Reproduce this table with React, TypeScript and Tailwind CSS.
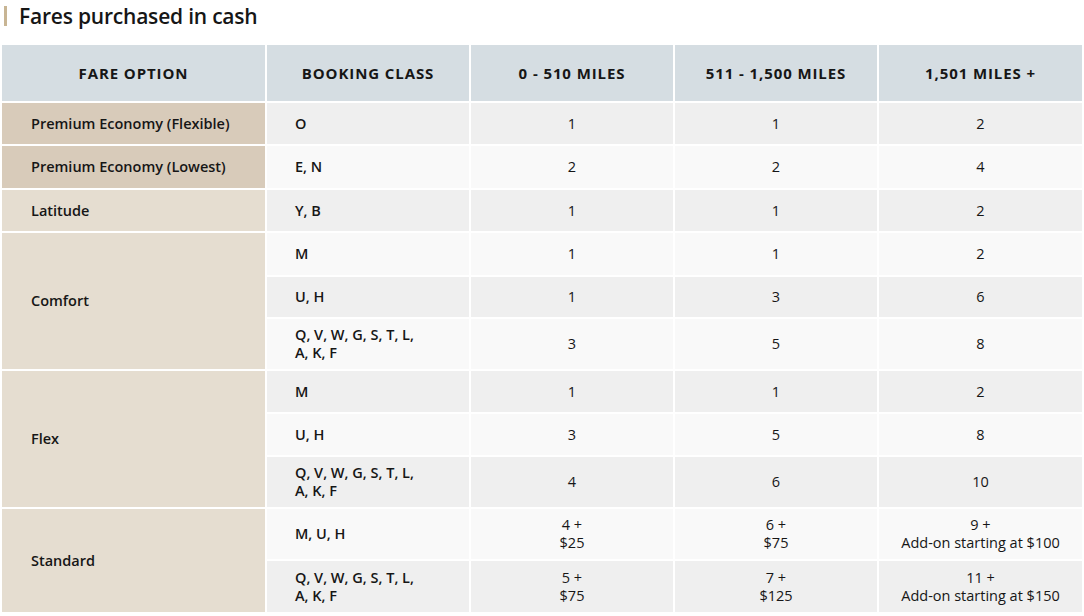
import React from 'react';

type Sub = { cls: string[]; a: string[]; b: string[]; c: string[]; h: number };
type Group = { name: string; dark?: boolean; subs: Sub[] };

const groups: Group[] = [
  { name: 'Premium Economy (Flexible)', dark: true, subs: [{ cls: ['O'], a: ['1'], b: ['1'], c: ['2'], h: 43 }] },
  { name: 'Premium Economy (Lowest)', dark: true, subs: [{ cls: ['E, N'], a: ['2'], b: ['2'], c: ['4'], h: 44 }] },
  { name: 'Latitude', subs: [{ cls: ['Y, B'], a: ['1'], b: ['1'], c: ['2'], h: 43 }] },
  {
    name: 'Comfort',
    subs: [
      { cls: ['M'], a: ['1'], b: ['1'], c: ['2'], h: 44 },
      { cls: ['U, H'], a: ['1'], b: ['3'], c: ['6'], h: 42 },
      { cls: ['Q, V, W, G, S, T, L,', 'A, K, F'], a: ['3'], b: ['5'], c: ['8'], h: 52 },
    ],
  },
  {
    name: 'Flex',
    subs: [
      { cls: ['M'], a: ['1'], b: ['1'], c: ['2'], h: 43 },
      { cls: ['U, H'], a: ['3'], b: ['5'], c: ['8'], h: 43 },
      { cls: ['Q, V, W, G, S, T, L,', 'A, K, F'], a: ['4'], b: ['6'], c: ['10'], h: 52 },
    ],
  },
  {
    name: 'Standard',
    subs: [
      { cls: ['M, U, H'], a: ['4 +', '$25'], b: ['6 +', '$75'], c: ['9 +', 'Add-on starting at $100'], h: 52 },
      { cls: ['Q, V, W, G, S, T, L,', 'A, K, F'], a: ['5 +', '$75'], b: ['7 +', '$125'], c: ['11 +', 'Add-on starting at $150'], h: 52 },
    ],
  },
];

const Lines = ({ items }: { items: string[] }) => (
  <>
    {items.map((t, i) => (
      <div key={i}>{t}</div>
    ))}
  </>
);

export default function App() {
  let idx = 0;
  return (
    <div
      className="w-[1084px] h-[616px] bg-white text-[#161616] overflow-hidden"
      style={{ fontFamily: '"Open Sans", Lato, sans-serif' }}
    >
      <div className="flex items-center h-[32px] pl-[4px]">
        <div className="w-[3px] h-[20px] bg-[#c8b594]" />
        <h1 className="ml-[12px] text-[21px] font-semibold leading-none tracking-[-0.01em]">Fares purchased in cash</h1>
      </div>
      <div className="pl-[2px] pt-[13px]">
        <table className="border-collapse text-[14.5px] leading-[18px]">
          <thead>
            <tr className="h-[57px] bg-[#d5dde2] text-[15px] font-bold uppercase tracking-[0.06em]">
              <th className="w-[264px] border-r-2 border-white font-bold">Fare Option</th>
              <th className="w-[204px] border-r-2 border-white font-bold">Booking Class</th>
              <th className="w-[204px] border-r-2 border-white font-bold">0 - 510 Miles</th>
              <th className="w-[204px] border-r-2 border-white font-bold">511 - 1,500 Miles</th>
              <th className="w-[204px] font-bold">1,501 Miles +</th>
            </tr>
          </thead>
          <tbody>
            {groups.map((g) =>
              g.subs.map((s, si) => {
                const grey = idx++ % 2 === 0;
                const cell = `border-t-2 border-white ${grey ? 'bg-[#efefef]' : 'bg-[#f9f9f9]'}`;
                return (
                  <tr key={g.name + si} style={{ height: s.h }}>
                    {si === 0 && (
                      <td
                        rowSpan={g.subs.length}
                        className={`border-t-2 border-r-2 border-white pl-[29px] font-semibold ${
                          g.dark ? 'bg-[#d8cbba]' : 'bg-[#e5ddd0]'
                        }`}
                      >
                        {g.name}
                      </td>
                    )}
                    <td className={`${cell} border-r-2 pl-[28px] font-semibold`}>
                      <Lines items={s.cls} />
                    </td>
                    <td className={`${cell} border-r-2 text-center`}>
                      <Lines items={s.a} />
                    </td>
                    <td className={`${cell} border-r-2 text-center`}>
                      <Lines items={s.b} />
                    </td>
                    <td className={`${cell} text-center`}>
                      <Lines items={s.c} />
                    </td>
                  </tr>
                );
              })
            )}
          </tbody>
        </table>
      </div>
    </div>
  );
}
